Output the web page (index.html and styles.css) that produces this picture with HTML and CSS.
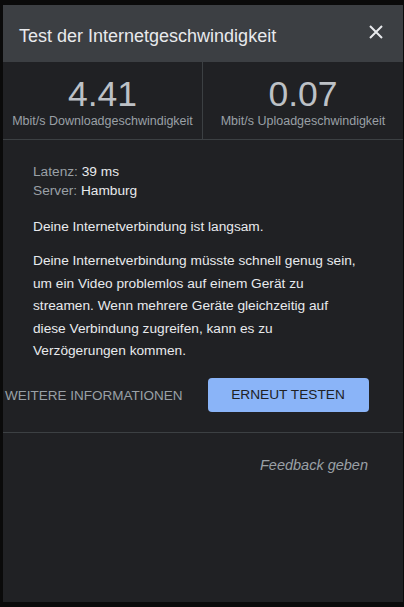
FILE: index.html
```html
<!DOCTYPE html>
<html lang="de">

<head>
    <meta charset="UTF-8">
    <meta name="viewport" content="width=device-width, initial-scale=1.0">
    <title>Test der Internetgeschwindigkeit</title>
    <link rel="stylesheet" href="styles.css">
</head>

<body>
    <div class="dialog">
        <div class="header">
            <span class="title">Test der Internetgeschwindigkeit</span>
            <button class="close" aria-label="Schließen">
                <svg width="14" height="14" viewBox="0 0 14 14">
                    <path d="M1 1L13 13M13 1L1 13" stroke="#e8eaed" stroke-width="2" />
                </svg>
            </button>
        </div>
        <div class="stats">
            <div class="stat">
                <div class="value">4.41</div>
                <div class="unit">Mbit/s Downloadgeschwindigkeit</div>
            </div>
            <div class="stat">
                <div class="value">0.07</div>
                <div class="unit">Mbit/s Uploadgeschwindigkeit</div>
            </div>
        </div>
        <div class="content">
            <div class="meta">
                <div><span class="label">Latenz:</span> 39 ms</div>
                <div><span class="label">Server:</span> Hamburg</div>
            </div>
            <p class="status">Deine Internetverbindung ist langsam.</p>
            <p class="desc">Deine Internetverbindung müsste schnell genug sein,<br>
                um ein Video problemlos auf einem Gerät zu<br>
                streamen. Wenn mehrere Geräte gleichzeitig auf<br>
                diese Verbindung zugreifen, kann es zu<br>
                Verzögerungen kommen.</p>
        </div>
        <div class="actions">
            <a class="more">WEITERE INFORMATIONEN</a>
            <button class="retry">ERNEUT TESTEN</button>
        </div>
        <div class="footer">
            <a class="feedback">Feedback geben</a>
        </div>
    </div>
</body>

</html>
```

FILE: styles.css
```css
* {
    margin: 0;
    padding: 0;
    box-sizing: border-box;
    font-family: "Liberation Sans", Arial, sans-serif;
}

body {
    background-color: #0a0a0a;
}

.dialog {
    margin: 5px 1px 0 3px;
    width: 400px;
    height: 597px;
    background-color: #202124;
    display: flex;
    flex-direction: column;
}

.header {
    height: 57px;
    background-color: #3c3f43;
    display: flex;
    align-items: center;
    justify-content: space-between;
    padding: 6px 20px 0 16px;
}

.title {
    font-size: 18px;
    color: #e8eaed;
}

.close {
    background: none;
    border: none;
    width: 14px;
    height: 14px;
    margin-bottom: 9px;
    display: flex;
}

.stats {
    height: 78px;
    display: grid;
    grid-template-columns: 199px 1fr;
    border-bottom: 1px solid #3c4043;
}

.stat {
    display: flex;
    flex-direction: column;
    align-items: center;
    padding-top: 13px;
}

.stat + .stat {
    border-left: 1px solid #3c4043;
}

.value {
    font-size: 35.5px;
    line-height: 38px;
    color: #bdc1c6;
}

.unit {
    font-size: 12.5px;
    color: #9aa0a6;
    margin-top: 1px;
}

.content {
    padding: 22px 20px 0 30px;
    font-size: 13.7px;
    color: #e8eaed;
}

.meta {
    line-height: 19px;
}

.label {
    color: #9aa0a6;
}

.status {
    margin-top: 17px;
    line-height: 19px;
}

.desc {
    margin-top: 14px;
    line-height: 22.5px;
    white-space: nowrap;
}

.actions {
    display: flex;
    align-items: flex-start;
    padding: 15px 0 0 2px;
    height: 70px;
    border-bottom: 1px solid #3c4043;
}

.more {
    font-size: 13.5px;
    color: #9aa0a6;
    margin-top: 10px;
}

.retry {
    margin-left: 25px;
    width: 161px;
    height: 34px;
    border: none;
    border-radius: 4px;
    background-color: #8ab4f8;
    color: #202124;
    font-size: 13.7px;
}

.footer {
    display: flex;
    justify-content: flex-end;
    padding: 24px 35px 0 0;
}

.feedback {
    font-size: 14.5px;
    font-style: italic;
    color: #9aa0a6;
}
```
